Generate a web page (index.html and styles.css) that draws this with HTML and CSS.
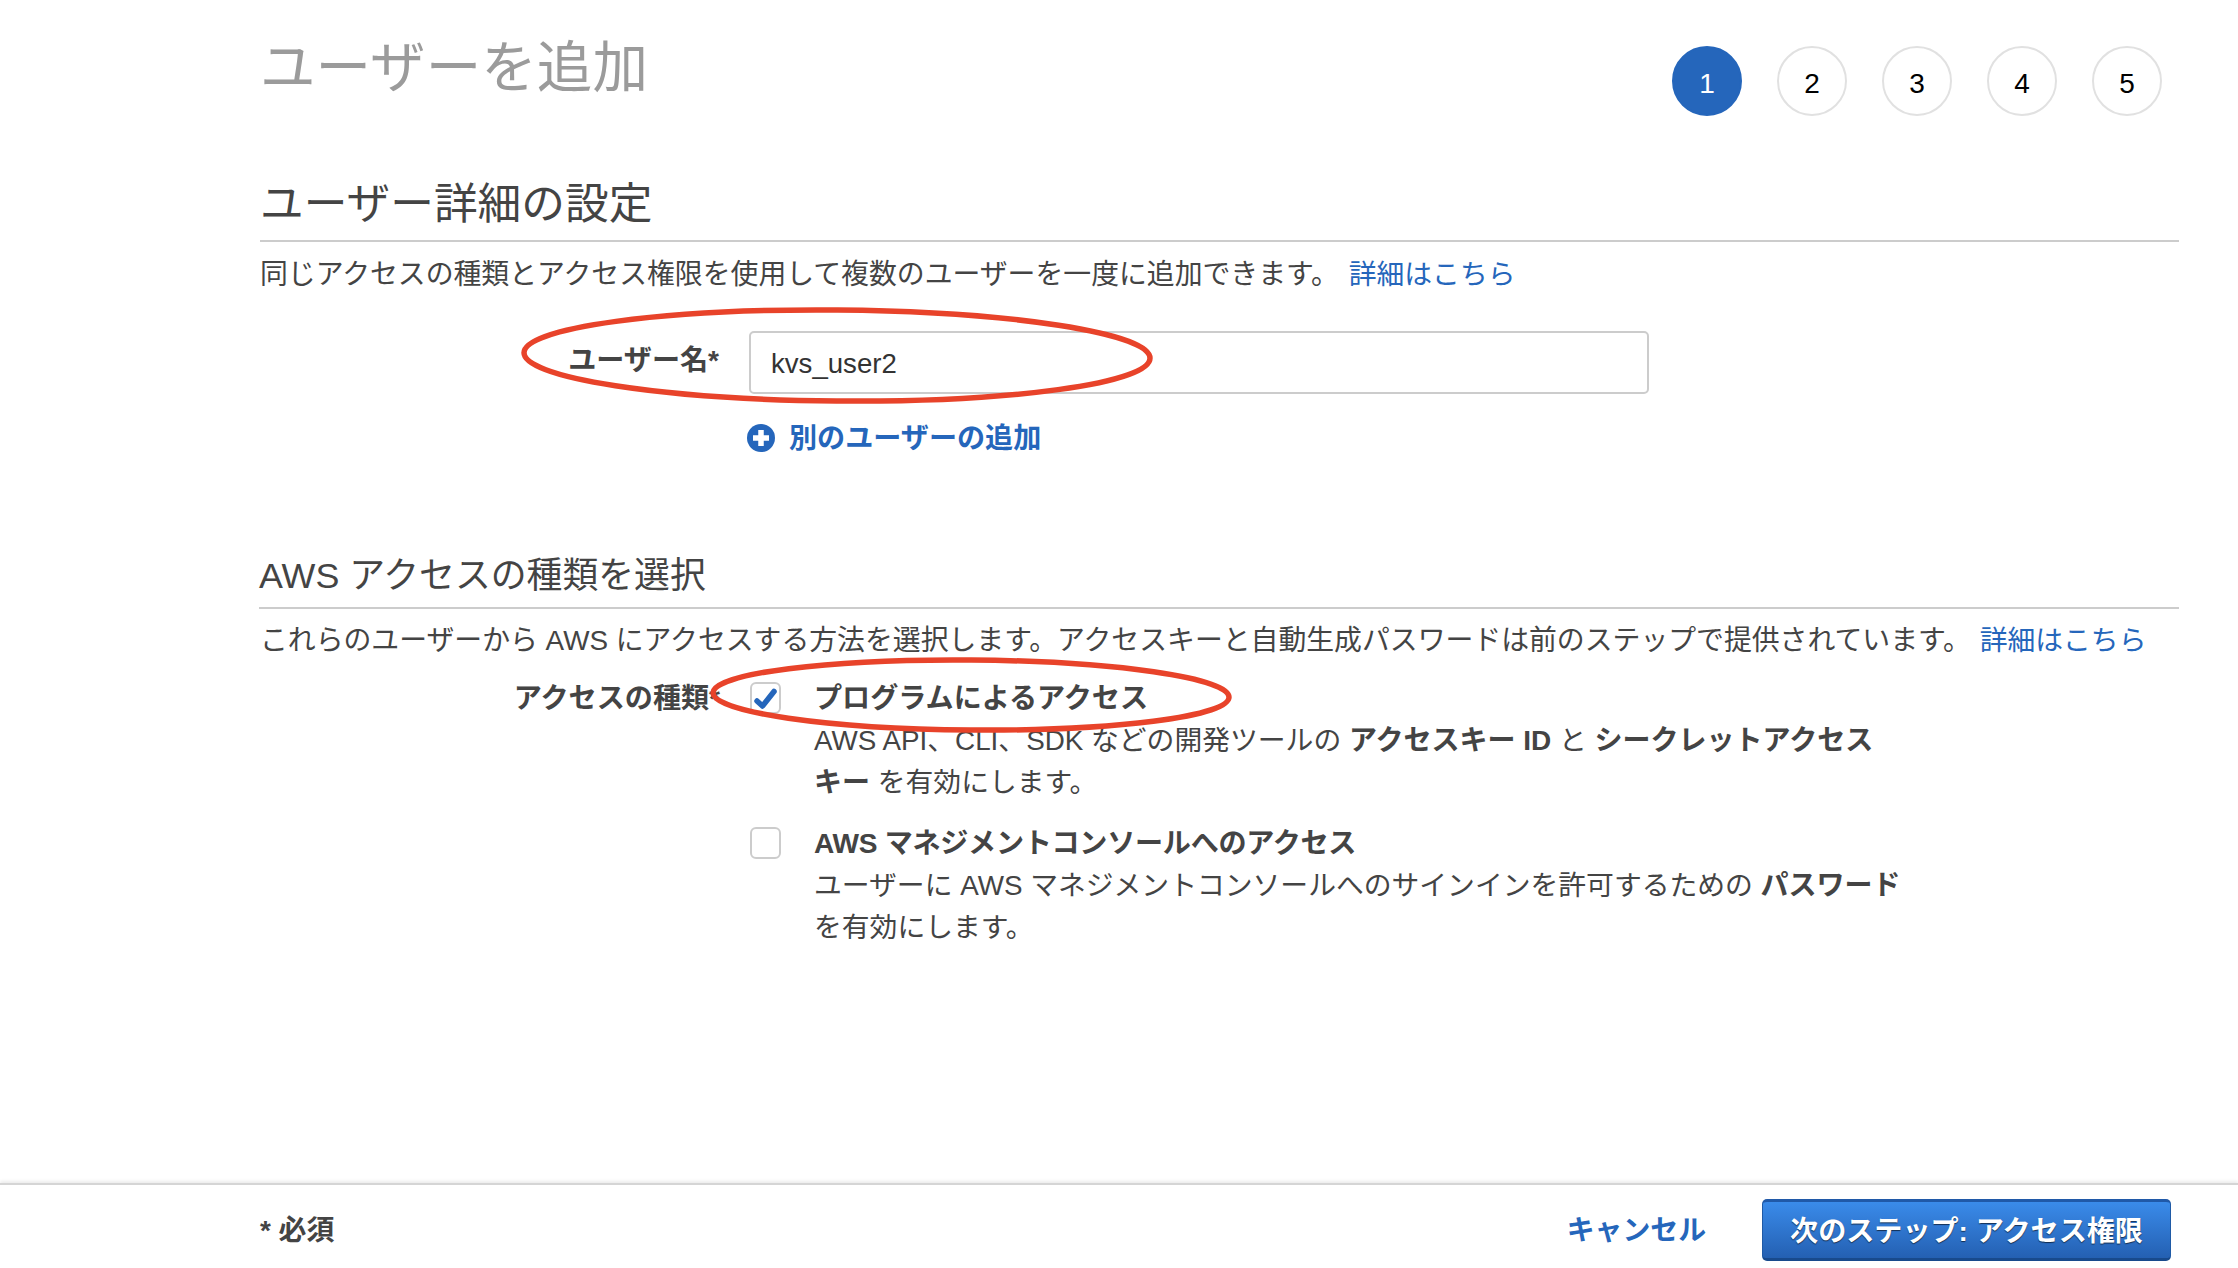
FILE: index.html
```html
<!DOCTYPE html>
<html lang="ja">
<head>
<meta charset="utf-8">
<title>ユーザーを追加</title>
<link rel="stylesheet" href="styles.css">
</head>
<body>
<div class="page">
  <main class="main">
    <header class="header">
      <h1 class="title">ユーザーを追加</h1>
      <ol class="steps">
        <li class="step step-active">1</li>
        <li class="step">2</li>
        <li class="step">3</li>
        <li class="step">4</li>
        <li class="step">5</li>
      </ol>
    </header>

    <h2 class="section-title section-first">ユーザー詳細の設定</h2>
    <p class="intro intro-first">同じアクセスの種類とアクセス権限を使用して複数のユーザーを一度に追加できます。 <a class="link" href="#">詳細はこちら</a></p>

    <div class="form-row form-row-user">
      <label class="form-label form-label-user">ユーザー名*</label>
      <div class="text-input">kvs_user2</div>
    </div>
    <div class="form-row add-row">
      <span></span>
      <a class="add-link" href="#">
        <svg class="plus-icon" viewBox="0 0 28 28" aria-hidden="true"><circle cx="14" cy="14" r="14" fill="#2566bb"/><path d="M14 6v16M6 14h16" fill="none" stroke="#fff" stroke-width="5.500"/></svg>
        別のユーザーの追加
      </a>
    </div>

    <h2 class="section-title section-second">AWS アクセスの種類を選択</h2>
    <p class="intro intro-second">これらのユーザーから AWS にアクセスする方法を選択します。アクセスキーと自動生成パスワードは前のステップで提供されています。 <a class="link" href="#">詳細はこちら</a></p>

    <div class="form-row form-row-access">
      <label class="form-label">アクセスの種類*</label>
      <div class="options">
        <div class="option">
          <span class="checkbox">
            <svg class="check-icon" viewBox="0 0 27 28" aria-hidden="true"><path d="M5 17l5.500 5L22 7.500" fill="none" stroke="#2566bb" stroke-width="5.500" stroke-linecap="round" stroke-linejoin="round"/></svg>
          </span>
          <div class="option-text">
            <div class="option-title">プログラムによるアクセス</div>
            <div class="option-desc">AWS API、CLI、SDK などの開発ツールの <b>アクセスキー ID</b> と <b>シークレットアクセス<br>キー</b> を有効にします。</div>
          </div>
        </div>
        <div class="option">
          <span class="checkbox"></span>
          <div class="option-text">
            <div class="option-title option-title-aws">AWS マネジメントコンソールへのアクセス</div>
            <div class="option-desc">ユーザーに AWS マネジメントコンソールへのサインインを許可するための <b>パスワード</b><br>を有効にします。</div>
          </div>
        </div>
      </div>
    </div>
  </main>

  <footer class="footer">
    <span class="required">* 必須</span>
    <a class="cancel" href="#">キャンセル</a>
    <button class="next" type="button">次のステップ: アクセス権限</button>
  </footer>

  <svg class="annotations" viewBox="0 0 2238 1268" aria-hidden="true">
    <ellipse cx="837" cy="355.500" rx="313" ry="45.500" transform="rotate(0.500 837 355.500)"/>
    <ellipse cx="971" cy="695" rx="258" ry="35" transform="rotate(0.500 971 695)"/>
  </svg>
</div>
</body>
</html>
```
FILE: styles.css
```css
* { box-sizing: border-box; }
html, body { margin: 0; padding: 0; background: #fff; }
body {
  font-family: "Liberation Sans", "Noto Sans CJK JP", sans-serif;
  font-size: 27.85px;
  color: #444;
}
.page {
  position: relative;
  width: 2238px;
  height: 1268px;
  display: flex;
  flex-direction: column;
  overflow: hidden;
}
.main { flex: 1; padding: 0 59px 0 260px; }

.header {
  display: flex;
  justify-content: space-between;
  align-items: flex-start;
  height: 128px;
  padding-top: 35px;
}
.title {
  margin: 0;
  font-size: 55.6px;
  line-height: 66px;
  font-weight: 400;
  color: #9b9b9b;
}
.steps {
  display: flex;
  gap: 35px;
  list-style: none;
  margin: 11px 17px 0 0;
  padding: 0;
}
.step {
  width: 70px;
  height: 70px;
  border: 2px solid #e1e1e1;
  border-radius: 50%;
  display: flex;
  align-items: center;
  justify-content: center;
  padding-top: 6px;
  font-size: 28px;
  color: #000;
}
.step-active { background: #2566bb; border-color: #2566bb; color: #fff; }

.section-title {
  margin: 0;
  font-weight: 400;
  color: #444;
  border-bottom: 2px solid #ccc;
}
.section-first { margin-top: 51px; font-size: 43.7px; line-height: 50px; padding-bottom: 11px; }
.section-second { margin-top: 92px; font-size: 35.85px; line-height: 50px; padding-bottom: 6px; margin-left: -1px; }

.intro { margin: 0; line-height: 40px; white-space: nowrap; }
.intro-first { margin-top: 13px; }
.intro-first .link { margin-left: 2px; }
.intro-second { margin-top: 12px; }
.intro-second .link { margin-left: 1px; }
.link { color: #2566bb; text-decoration: none; font-size: 27.8px; }

.form-row { display: grid; grid-template-columns: 489px 1fr; }
.form-row-user { margin-top: 36px; }
.form-label {
  text-align: right;
  padding-right: 29px;
  font-weight: 700;
  font-size: 28.1px;
  line-height: 42px;
}
.form-label-user { line-height: 60px; padding-right: 30px; }
.text-input {
  width: 900px;
  height: 63px;
  padding: 2px 20px 0;
  border: 2px solid #ccc;
  border-radius: 5px;
  display: flex;
  align-items: center;
  font-size: 27.6px;
  color: #333;
}
.add-row { margin-top: 25px; }
.add-link {
  display: flex;
  align-items: center;
  gap: 14px;
  margin-left: -2px;
  line-height: 40px;
  font-weight: 700;
  font-size: 28.1px;
  color: #2566bb;
  text-decoration: none;
}
.plus-icon { width: 28px; height: 28px; margin-bottom: 2px; }

.form-row-access { margin-top: 17px; }
.options { display: flex; flex-direction: column; gap: 19px; }
.option { display: grid; grid-template-columns: 31px 1fr; column-gap: 33px; margin-left: 1px; }
.checkbox {
  width: 31px;
  height: 32px;
  margin-top: 4px;
  border: 2px solid #ccc;
  border-radius: 6px;
  display: flex;
  align-items: center;
  justify-content: center;
}
.check-icon { width: 27px; height: 28px; flex: none; }
.option-title { font-weight: 700; font-size: 28.1px; line-height: 42px; }
.option-title-aws { letter-spacing: -0.28px; }
.option-desc { font-size: 27.8px; line-height: 42px; white-space: nowrap; }
.option-desc b { font-size: 28px; }

.footer {
  height: 85px;
  flex: none;
  border-top: 2px solid #d5d5d5;
  box-shadow: 0 -2px 3px rgba(0, 0, 0, 0.08);
  display: flex;
  align-items: center;
  padding: 14px 67px 7px 260px;
}
.required { font-weight: 700; margin-right: auto; margin-bottom: 4px; }
.cancel { font-weight: 700; color: #2566bb; text-decoration: none; margin-right: 56px; margin-bottom: 4px; }
.next {
  width: 409px;
  height: 62px;
  padding: 0 0 3px;
  font: inherit;
  font-weight: 700;
  font-size: 28.1px;
  color: #fff;
  text-shadow: 0 1px 1px rgba(0, 0, 0, 0.6);
  background: linear-gradient(#3a8bea, #2460b2);
  border: 1px solid #1f5aa6;
  border-top: 3px solid #2059a8;
  border-bottom: 3px solid #184a8c;
  border-radius: 5px;
}

.annotations {
  position: absolute;
  inset: 0;
  width: 2238px;
  height: 1268px;
  pointer-events: none;
}
.annotations ellipse { fill: none; stroke: #e8432a; stroke-width: 5.5; }
```
